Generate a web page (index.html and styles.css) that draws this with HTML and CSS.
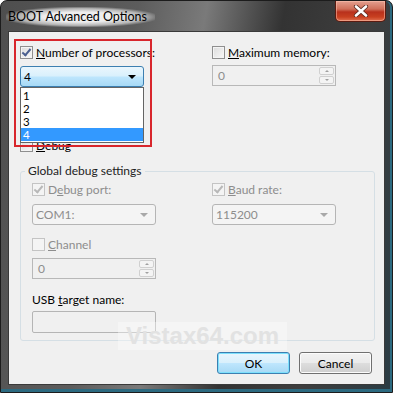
FILE: index.html
```html
<!DOCTYPE html>
<html>
<head>
    <meta charset="utf-8">
    <title>BOOT Advanced Options</title>
    <link rel="stylesheet" href="styles.css">
</head>
<body>
    <div class="window">
        <div class="titlebar">
            <span class="title">BOOT Advanced Options</span>
            <div class="close">
                <svg width="16" height="12" viewBox="0 0 16 12">
                    <path d="M3 1.5 L13 10.5 M13 1.5 L3 10.5" stroke="#5a2a20" stroke-width="4.2" stroke-linecap="round"/>
                    <path d="M3 1.5 L13 10.5 M13 1.5 L3 10.5" stroke="#fff" stroke-width="2.6" stroke-linecap="round"/>
                </svg>
            </div>
        </div>
        <div class="client">
            <div class="top">
                <div class="col">
                    <div class="check"><span class="box checked"></span><span><u>N</u>umber of processors:</span></div>
                    <div class="combo active"><span>4</span><span class="arrow"></span></div>
                    <div class="check debug"><span class="box"></span><span><u>D</u>ebug</span></div>
                </div>
                <div class="col">
                    <div class="check"><span class="box"></span><span><u>M</u>aximum memory:</span></div>
                    <div class="spin first"><span>0</span><div class="spinbtns"><span class="up"></span><span class="down"></span></div></div>
                </div>
            </div>

            <div class="group">
                <span class="legend">Global debug settings</span>
                <div class="grow">
                    <div class="col">
                        <div class="check off"><span class="box checked"></span><span>D<u>e</u>bug port:</span></div>
                        <div class="combo off"><span>COM1:</span><span class="arrow"></span></div>
                    </div>
                    <div class="col">
                        <div class="check off"><span class="box checked"></span><span><u>B</u>aud rate:</span></div>
                        <div class="combo off"><span>115200</span><span class="arrow"></span></div>
                    </div>
                </div>
                <div class="check off channel"><span class="box"></span><span><u>C</u>hannel</span></div>
                <div class="spin"><span>0</span><div class="spinbtns"><span class="up"></span><span class="down"></span></div></div>
                <div class="plain">USB <u>t</u>arget name:</div>
                <div class="textbox"></div>
            </div>

            <div class="buttons">
                <div class="btn default">OK</div>
                <div class="btn">Cancel</div>
            </div>

            <ul class="droplist">
                <li>1</li>
                <li>2</li>
                <li>3</li>
                <li class="sel">4</li>
            </ul>
            <div class="highlight"></div>
            <div class="watermark">Vistax64.com</div>
        </div>
    </div>
</body>
</html>
```

FILE: styles.css
```css
* {
  box-sizing: border-box;
}

body {
  margin: 0;
  background: #fff;
  font-family: Lato, "Noto Sans", sans-serif;
  font-size: 12px;
  color: #000;
}

u {
  text-decoration: underline;
  text-underline-offset: 1px;
}

.window {
  width: 393px;
  height: 393px;
  border-radius: 7px 7px 0 0;
  background: linear-gradient(100deg, #4e4e4e 0%, #5c5c5c 30%, #7a7a7a 45%, #333 62%, #3e3e3e 80%, #2a3c44 100%);
  border: 1px solid #1c1c1c;
  padding: 0 7px 8px 7px;
  box-shadow: inset 0 -3px 0 #2c6a80, inset -2px 0 0 #2c6a80;
}

.titlebar {
  height: 30px;
  display: flex;
  justify-content: space-between;
  align-items: flex-start;
}

.title {
  margin-top: 6px;
  font-size: 12.5px;
  color: #000;
  background: radial-gradient(ellipse at center, rgba(255,255,255,0.9) 35%, rgba(255,255,255,0.55) 60%, rgba(255,255,255,0) 75%);
  padding: 2px 8px 3px 2px;
  margin-left: -2px;
}

.close {
  width: 51px;
  height: 21px;
  margin-right: -1px;
  border: 1px solid #5a1a10;
  border-top: none;
  border-radius: 0 0 5px 5px;
  background: linear-gradient(#e4a090 0%, #d0705a 40%, #b8301c 55%, #c84020 80%, #e07050 100%);
  display: flex;
  align-items: center;
  justify-content: center;
  box-shadow: inset 0 0 0 1px rgba(255,200,180,0.5);
}

.client {
  position: relative;
  height: 354px;
  background: #f0f0f0;
  border: 1px solid #3a3a3a;
  padding: 14px 0 0 11px;
}

.top {
  display: flex;
  gap: 68px;
  height: 124px;
}

.col {
  width: 124px;
  display: flex;
  flex-direction: column;
}

.check {
  display: flex;
  align-items: center;
  gap: 3px;
  height: 13px;
  line-height: 13px;
  white-space: nowrap;
}

.box {
  width: 13px;
  height: 13px;
  flex: none;
  border: 1px solid #8f8f8f;
  background: linear-gradient(135deg, #dcdcdc, #f8f8f8);
  box-shadow: inset 0 0 0 1px #f4f4f4;
  position: relative;
}

.box.checked::after {
  content: "";
  position: absolute;
  left: 3px;
  top: 0px;
  width: 3px;
  height: 7px;
  border-right: 2px solid #4a5f8f;
  border-bottom: 2px solid #4a5f8f;
  transform: rotate(40deg);
}

.check.off {
  color: #8d8d8d;
}

.check.off .box {
  border-color: #c4c4c4;
  background: #f4f4f4;
  box-shadow: none;
}

.check.off .box.checked::after {
  border-color: #b8b8b8;
}

.combo {
  margin-top: 7px;
  height: 21px;
  border: 1px solid #3c7fb1;
  border-radius: 3px;
  display: flex;
  align-items: center;
  justify-content: space-between;
  padding: 0 7px 0 3px;
}

.combo.active {
  background: linear-gradient(#eaf6fd 0%, #d9f0fc 48%, #bee6fd 52%, #a7d9f5 100%);
}

.combo .arrow {
  width: 0;
  height: 0;
  border-left: 4px solid transparent;
  border-right: 4px solid transparent;
  border-top: 4px solid #000;
}

.combo.off {
  border-color: #b5b5b5;
  background: #f4f4f4;
  color: #8d8d8d;
  margin-top: 8px;
}

.combo.off .arrow {
  border-top-color: #a8a8a8;
}

.debug {
  margin-top: 52px;
}

.spin {
  height: 21px;
  width: 124px;
  border: 1px solid #b8b8b8;
  background: #f0f0f0;
  color: #8d8d8d;
  display: flex;
  align-items: center;
  justify-content: space-between;
  padding: 0 0 0 5px;
  margin-top: 7px;
}

.spin.first {
  margin-top: 6px;
}

.spinbtns {
  width: 16px;
  height: 19px;
  display: flex;
  flex-direction: column;
  gap: 1px;
  padding: 1px 1px 1px 0;
}

.spinbtns span {
  flex: 1;
  border: 1px solid #d0d0d0;
  border-radius: 2px;
  background: #f4f4f4;
  position: relative;
}

.spinbtns span::after {
  content: "";
  position: absolute;
  left: 5px;
  top: 2px;
  border-left: 2px solid transparent;
  border-right: 2px solid transparent;
}

.spinbtns .up::after {
  border-bottom: 2px solid #a0a0a0;
}

.spinbtns .down::after {
  border-top: 2px solid #a0a0a0;
}

.group {
  width: 355px;
  height: 170px;
  margin-top: 1px;
  border: 1px solid #d5dfe5;
  border-radius: 3px;
  padding: 11px 0 0 11px;
  position: relative;
}

.legend {
  position: absolute;
  top: -8px;
  left: 4px;
  padding: 0 3px;
  background: #f0f0f0;
  line-height: 14px;
  color: #1e1e1e;
}

.grow {
  display: flex;
  gap: 56px;
}

.channel {
  margin-top: 13px;
}

.plain {
  margin-top: 14px;
  line-height: 13px;
}

.textbox {
  margin-top: 5px;
  width: 124px;
  height: 22px;
  border: 1px solid #b5b5b5;
  border-radius: 2px;
  background: #f0f0f0;
}

.buttons {
  display: flex;
  justify-content: flex-end;
  gap: 9px;
  margin-top: 11px;
  padding-right: 12px;
}

.btn {
  width: 73px;
  height: 22px;
  border: 1px solid #707070;
  border-radius: 3px;
  background: linear-gradient(#f2f2f2 0%, #ebebeb 48%, #dddddd 52%, #cfcfcf 100%);
  box-shadow: inset 0 0 0 1px #fcfcfc;
  display: flex;
  align-items: center;
  justify-content: center;
}

.btn.default {
  border-color: #3c7fb1;
  background: linear-gradient(#eaf6fd 0%, #d9f0fc 48%, #bee6fd 52%, #a7d9f5 100%);
  box-shadow: inset 0 0 0 1px #7de0fc;
}

.droplist {
  position: absolute;
  left: 11px;
  top: 55px;
  width: 124px;
  margin: 0;
  padding: 1px 0;
  list-style: none;
  background: #fff;
  border: 1px solid #646464;
  font-size: 11.5px;
}

.droplist li {
  height: 13px;
  line-height: 13px;
  padding-left: 2px;
}

.droplist li.sel {
  background: #3399ff;
  color: #fff;
}

.highlight {
  position: absolute;
  left: 5px;
  top: 7px;
  width: 138px;
  height: 108px;
  border: 2px solid #d8262c;
}

.watermark {
  position: absolute;
  left: 109px;
  top: 290px;
  padding: 0 8px;
  font-family: "Liberation Sans", sans-serif;
  font-weight: bold;
  font-size: 24px;
  line-height: 28px;
  color: #e2e2e2;
  background: rgba(255,255,255,0.35);
}
```
